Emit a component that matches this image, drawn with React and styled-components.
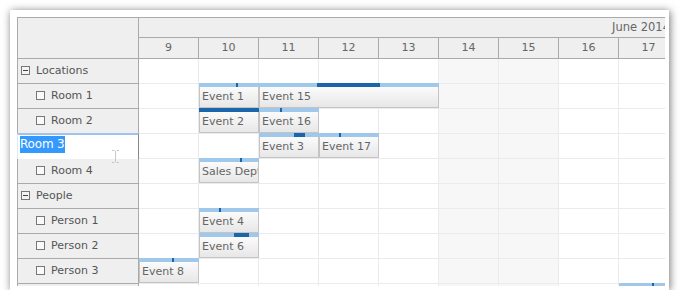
import React from 'react';
import styled, {createGlobalStyle, css} from 'styled-components';

const GlobalStyle = createGlobalStyle`
  body {
    margin: 0;
    background: #fff;
    font-family: "DejaVu Sans", Verdana, sans-serif;
  }
`;

const COL = 60;
const FIRST_DAY = 9;
const days = [9, 10, 11, 12, 13, 14, 15, 16, 17, 18];
const isWeekend = (d) => d === 14 || d === 15;

const rows = [
  {name: 'Locations', group: true, events: []},
  {name: 'Room 1', events: [
    {text: 'Event 1', day: 10, span: 1, marks: [[37, 2]]},
    {text: 'Event 15', day: 11, span: 3, marks: [[58, 63]]},
  ]},
  {name: 'Room 2', events: [
    {text: 'Event 2', day: 10, span: 1, marks: [[0, 60]]},
    {text: 'Event 16', day: 11, span: 1, marks: [[21, 2]]},
  ]},
  {name: 'Room 3', editing: true, events: [
    {text: 'Event 3', day: 11, span: 1, marks: [[35, 11]]},
    {text: 'Event 17', day: 12, span: 1, marks: [[20, 2]]},
  ]},
  {name: 'Room 4', events: [
    {text: 'Sales Dept', day: 10, span: 1, marks: [[41, 2]]},
  ]},
  {name: 'People', group: true, events: []},
  {name: 'Person 1', events: [
    {text: 'Event 4', day: 10, span: 1, marks: [[20, 2]]},
  ]},
  {name: 'Person 2', events: [
    {text: 'Event 6', day: 10, span: 1, marks: [[35, 15]]},
  ]},
  {name: 'Person 3', events: [
    {text: 'Event 8', day: 9, span: 1, marks: [[33, 2]]},
  ]},
  {name: '', events: [
    {text: '', day: 17, span: 1, marks: [[33, 2]]},
  ]},
];

const Frame = styled.div`
  margin: 10px 0 0 10px;
  width: 659px;
  height: 280px;
  box-sizing: border-box;
  padding: 7px 4px 5px 7px;
  background: #fff;
  box-shadow: 1px 1px 8px rgba(0, 0, 0, 0.55);
`;

const Scheduler = styled.div`
  display: flex;
  height: 268px;
  overflow: hidden;
  border-top: 1px solid #aaa;
  color: #666;
  font-size: 11px;
`;

const RowHeaders = styled.div`
  width: 122px;
  flex-shrink: 0;
  display: flex;
  flex-direction: column;
`;

const headerCell = css`
  box-sizing: border-box;
  background: #efefef;
  border-left: 1px solid #aaa;
  border-right: 1px solid #aaa;
  border-bottom: 1px solid #aaa;
`;

const Corner = styled.div`
  ${headerCell};
  height: 41px;
  flex-shrink: 0;
`;

const RowHeaderCell = styled.div`
  ${headerCell};
  height: 25px;
  flex-shrink: 0;
  display: flex;
  align-items: center;
  gap: 6px;
  padding: 0 0 2px ${p => (p.$group ? 3 : 18)}px;
  color: #555;
  white-space: nowrap;
`;

const Box = styled.span`
  width: 9px;
  height: 9px;
  box-sizing: border-box;
  border: 1px solid #777;
  background: ${p => (p.$group ? '#f4f4f4' : '#fafafa')};
  display: flex;
  align-items: center;
  justify-content: center;
  flex-shrink: 0;
  &::after {
    content: '';
    display: ${p => (p.$group ? 'block' : 'none')};
    width: 5px;
    height: 1px;
    background: #444;
  }
`;

const EditCell = styled.div`
  position: relative;
  box-sizing: border-box;
  margin-top: -1px;
  height: 26px;
  flex-shrink: 0;
  background: #fff;
  border-top: 2px solid #9ec4ee;
  border-left: 1px solid #dce9f7;
  border-right: 1px solid #888;
  padding: 1px 0 0 2px;
`;

const Selected = styled.span`
  display: inline-block;
  background: #3399ff;
  color: #fff;
  font-size: 12px;
  line-height: 17px;
  letter-spacing: -0.2px;
  padding-right: 1px;
`;

const Caret = styled.svg`
  position: absolute;
  left: 93px;
  top: 15px;
  z-index: 2;
`;

const Main = styled.div`
  flex: 1;
  min-width: 0;
  overflow: hidden;
`;

const MonthRow = styled.div`
  box-sizing: border-box;
  width: ${days.length * COL}px;
  height: 20px;
  background: #efefef;
  border-bottom: 1px solid #aaa;
  padding: 0 0 1px 473px;
  display: flex;
  align-items: center;
  white-space: nowrap;
  font-size: 11.5px;
`;

const DayRow = styled.div`
  display: flex;
  height: 21px;
`;

const DayCell = styled.div`
  box-sizing: border-box;
  width: ${COL}px;
  flex-shrink: 0;
  background: #efefef;
  border-right: 1px solid #aaa;
  border-bottom: 1px solid #aaa;
  display: flex;
  align-items: center;
  justify-content: center;
  padding-bottom: 2px;
`;

const GridRow = styled.div`
  position: relative;
  display: flex;
  height: 25px;
`;

const GridCell = styled.div`
  box-sizing: border-box;
  width: ${COL}px;
  flex-shrink: 0;
  border-right: 1px solid #ebebeb;
  border-bottom: 1px solid #ebebeb;
  background: ${p => (p.$weekend ? '#f7f7f7' : '#fff')};
`;

const Event = styled.div`
  position: absolute;
  top: -1px;
  height: 25px;
  display: flex;
  flex-direction: column;
  z-index: 1;
`;

const EventBar = styled.div`
  position: relative;
  height: 4px;
  flex-shrink: 0;
  background: #9fc8eb;
`;

const Mark = styled.div`
  position: absolute;
  top: 0;
  bottom: 0;
  background: #1b66ab;
`;

const EventBody = styled.div`
  flex: 1;
  box-sizing: border-box;
  border: 1px solid #c4c4c4;
  border-top: none;
  background: linear-gradient(#fbfbfb, #e7e7e7);
  display: flex;
  align-items: center;
  padding: 0 0 1px 2px;
  overflow: hidden;
  white-space: nowrap;
  color: #666;
`;

const App = () => (
  <>
    <GlobalStyle />
    <Frame>
      <Scheduler>
        <RowHeaders>
          <Corner />
          {rows.map((r, i) =>
            r.editing ? (
              <EditCell key={i}>
                <Selected>{r.name}</Selected>
                <Caret width="9" height="13" viewBox="0 0 9 13">
                  <path d="M1 0.5h2.5M5.5 0.5H8M4.5 1v11M1 12.5h2.5M5.5 12.5H8" stroke="#c9c9c9" fill="none" />
                </Caret>
              </EditCell>
            ) : (
              <RowHeaderCell key={i} $group={r.group}>
                {r.name && <Box $group={r.group} />}
                {r.name}
              </RowHeaderCell>
            )
          )}
        </RowHeaders>
        <Main>
          <MonthRow>June 2014</MonthRow>
          <DayRow>
            {days.map((d) => (
              <DayCell key={d}>{d}</DayCell>
            ))}
          </DayRow>
          {rows.map((r, i) => (
            <GridRow key={i}>
              {days.map((d) => (
                <GridCell key={d} $weekend={isWeekend(d)} />
              ))}
              {r.events.map((e, k) => (
                <Event
                  key={k}
                  style={{left: (e.day - FIRST_DAY) * COL, width: e.span * COL}}
                >
                  <EventBar>
                    {e.marks.map(([x, w]) => (
                      <Mark key={x} style={{left: x, width: w}} />
                    ))}
                  </EventBar>
                  <EventBody>{e.text}</EventBody>
                </Event>
              ))}
            </GridRow>
          ))}
        </Main>
      </Scheduler>
    </Frame>
  </>
);

export default App;
